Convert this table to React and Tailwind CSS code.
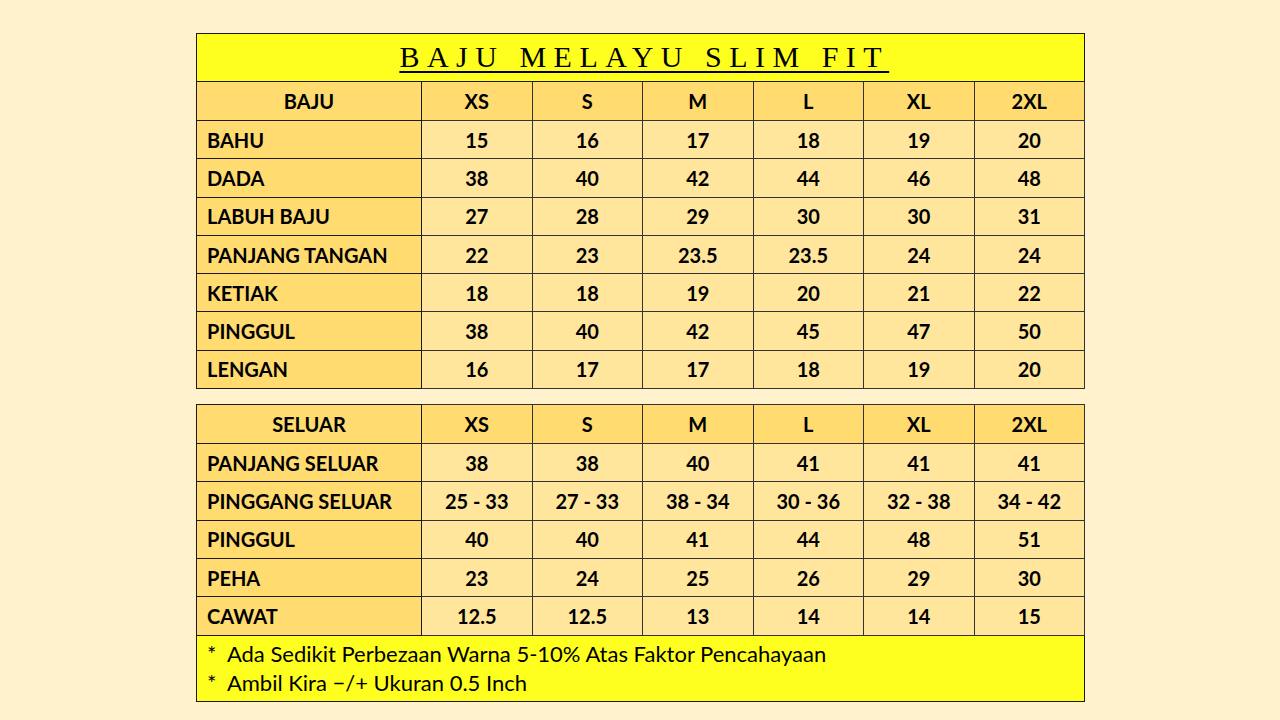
import React from "react";

const sizes = ["XS", "S", "M", "L", "XL", "2XL"];
const baju = [
  ["BAHU", "15", "16", "17", "18", "19", "20"],
  ["DADA", "38", "40", "42", "44", "46", "48"],
  ["LABUH BAJU", "27", "28", "29", "30", "30", "31"],
  ["PANJANG TANGAN", "22", "23", "23.5", "23.5", "24", "24"],
  ["KETIAK", "18", "18", "19", "20", "21", "22"],
  ["PINGGUL", "38", "40", "42", "45", "47", "50"],
  ["LENGAN", "16", "17", "17", "18", "19", "20"],
];
const seluar = [
  ["PANJANG SELUAR", "38", "38", "40", "41", "41", "41"],
  ["PINGGANG SELUAR", "25 - 33", "27 - 33", "38 - 34", "30 - 36", "32 - 38", "34 - 42"],
  ["PINGGUL", "40", "40", "41", "44", "48", "51"],
  ["PEHA", "23", "24", "25", "26", "29", "30"],
  ["CAWAT", "12.5", "12.5", "13", "14", "14", "15"],
];

const font = { fontFamily: "Lato, 'Open Sans', sans-serif" };

function Header({ label }) {
  return (
    <tr className="h-[39px]">
      <th className="border border-[#1a1a1a] bg-[#ffdb70] text-center text-[20px] font-bold text-black">{label}</th>
      {sizes.map((s) => (
        <th key={s} className="border border-[#333] bg-[#ffdb70] text-center text-[20px] font-bold text-black">{s}</th>
      ))}
    </tr>
  );
}

function Rows({ data }) {
  return data.map((r) => (
    <tr key={r[0]} className="h-[38.3px]">
      <td className="border border-[#1a1a1a] bg-[#ffdb70] pl-[10px] text-left text-[20px] font-bold text-black">{r[0]}</td>
      {r.slice(1).map((v, i) => (
        <td key={i} className="border border-[#333] bg-[#ffe69c] text-center text-[20px] font-bold text-black">{v}</td>
      ))}
    </tr>
  ));
}

function Cols() {
  return (
    <colgroup>
      <col className="w-[225px]" />
      {sizes.map((s) => (
        <col key={s} className="w-[110.5px]" />
      ))}
    </colgroup>
  );
}

export default function App() {
  return (
    <div className="w-[1280px] h-[720px] bg-[#fff2cc] pl-[196px] pt-[33px] overflow-hidden" style={font}>
      <table className="w-[888px] table-fixed border-collapse">
        <Cols />
        <tbody>
          <tr className="h-[48px]">
            <td colSpan={7} className="border border-[#1a1a1a] bg-[#ffff1f] text-center">
              <span
                className="inline-block text-[30px] leading-none tracking-[0.25em] text-black underline decoration-[2px] underline-offset-[4px] pl-[0.25em]"
                style={{ fontFamily: "'Liberation Serif', 'DejaVu Serif', serif" }}
              >
                BAJU MELAYU SLIM FIT
              </span>
            </td>
          </tr>
          <Header label="BAJU" />
          <Rows data={baju} />
        </tbody>
      </table>
      <table className="mt-[15px] w-[888px] table-fixed border-collapse">
        <Cols />
        <tbody>
          <Header label="SELUAR" />
          <Rows data={seluar} />
          <tr className="h-[66px]">
            <td colSpan={7} className="border border-[#1a1a1a] bg-[#ffff1f] pl-[10px] text-left text-[22px] leading-[29px] text-black">
              <div>*&nbsp; Ada Sedikit Perbezaan Warna 5-10% Atas Faktor Pencahayaan</div>
              <div>*&nbsp; Ambil Kira −/+ Ukuran 0.5 Inch</div>
            </td>
          </tr>
        </tbody>
      </table>
    </div>
  );
}
